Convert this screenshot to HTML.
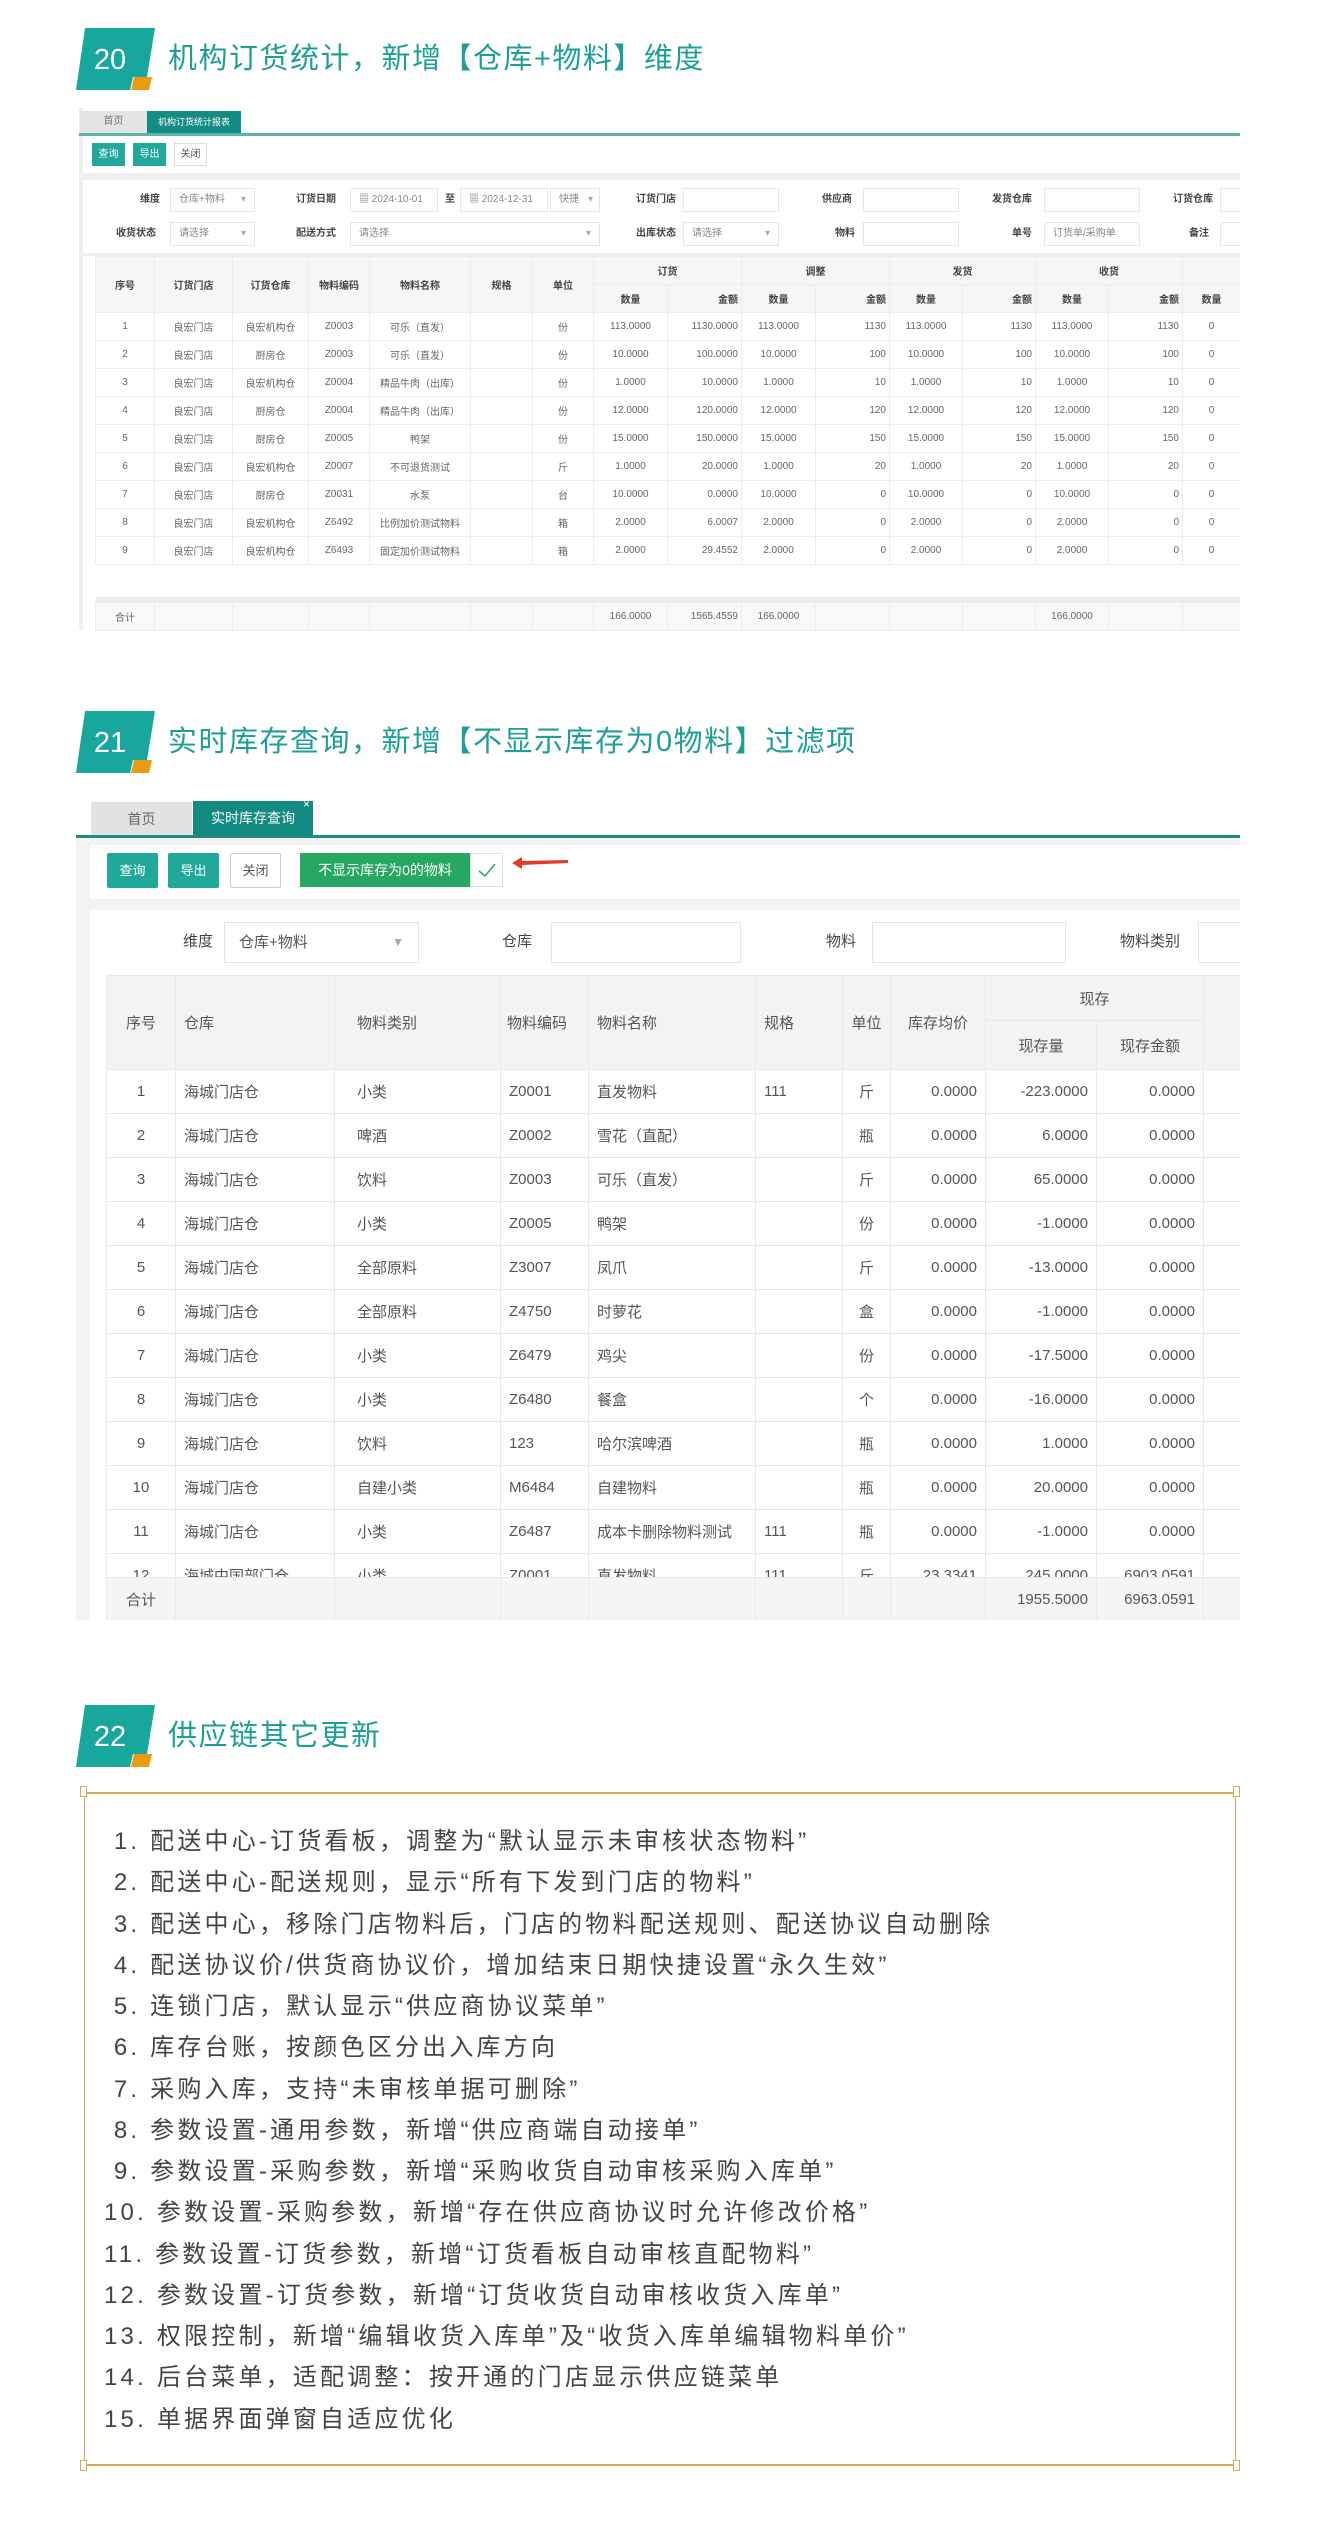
<!DOCTYPE html>
<html><head><meta charset="utf-8">
<style>
*{margin:0;padding:0;box-sizing:border-box}
body{width:1319px;height:2533px;background:#fff;position:relative;overflow:hidden;font-family:"Liberation Sans","Noto Sans CJK SC",sans-serif}
.a{position:absolute}
.title{position:absolute;left:168px;font-size:29px;letter-spacing:1.5px;color:#1e9f96;line-height:36px;white-space:nowrap}
.badge{position:absolute;left:76px;width:82px;height:62px}
.t1{border-collapse:collapse;table-layout:fixed;font-size:10px;color:#666}
.t1 td{border:1px solid #ececec;text-align:center;white-space:nowrap;overflow:hidden;height:28px;padding:0 3px}
.t1 .h td{background:#f6f6f6;color:#444;font-weight:bold}
.t1 .r{text-align:right}
.inp{position:absolute;border:1px solid #e6e6e6;background:#fff;font-size:10px;color:#888;line-height:22px;height:24px;padding-left:8px;white-space:nowrap;overflow:hidden}
.lb{position:absolute;font-size:10px;color:#444;font-weight:bold;line-height:24px;white-space:nowrap}
.t2{border-collapse:collapse;table-layout:fixed;font-size:15px;color:#555}
.t2 td{border:1px solid #e8e8e8;white-space:nowrap;overflow:hidden;height:44px;padding:0 8px}
.t2 .h td{background:#f3f3f3;color:#555}
.t2 .c{text-align:center}
.t2 .r{text-align:right}
.btn{position:absolute;color:#fff;font-size:13px;text-align:center}
.list{position:absolute;left:104px;font-size:24px;color:#444;letter-spacing:3.2px;white-space:nowrap;line-height:30px}
</style></head><body>

<!-- ===== Section 20 ===== -->
<svg class="badge" style="top:28px" viewBox="0 0 82 62"><polygon points="9,0 79,0 71,49 57,49 54,62 0,62" fill="#17a79c"/><polygon points="58,49 76,49 73,62 55,62" fill="#e99b12"/><text x="34" y="41" font-family="Liberation Sans" font-size="29" fill="#fff" text-anchor="middle">20</text></svg>
<div class="title" style="top:41px">机构订货统计，新增【仓库+物料】维度</div>

<div class="a" style="left:79px;top:108px;width:1161px;height:522px;background:#fff;border-left:4px solid #eee"></div>
<div class="a" style="left:80px;top:111px;width:67px;height:22px;background:#e4e4e4;font-size:10px;color:#777;text-align:center;line-height:22px">首页</div>
<div class="a" style="left:147px;top:111px;width:94px;height:22px;background:#148b83;font-size:9px;color:#fff;text-align:center;line-height:22px">机构订货统计报表</div>
<div class="a" style="left:235px;top:108px;font-size:9px;color:#148b83">×</div>
<div class="a" style="left:79px;top:133px;width:1161px;height:3px;background:#5ab3ac"></div>
<div class="btn" style="left:92px;top:143px;width:33px;height:23px;background:#20a89b;font-size:10px;line-height:23px">查询</div>
<div class="btn" style="left:133px;top:143px;width:33px;height:23px;background:#20a89b;font-size:10px;line-height:23px">导出</div>
<div class="btn" style="left:174px;top:143px;width:33px;height:23px;background:#fff;border:1px solid #ddd;color:#555;font-size:10px;line-height:21px">关闭</div>
<div class="a" style="left:79px;top:173px;width:1161px;height:7px;background:#f0f0f0"></div>

<div class="lb" style="left:140px;top:188px">维度</div><div class="inp" style="left:170px;top:188px;width:85px">仓库+物料<span style="position:absolute;right:8px;color:#aaa">▾</span></div>
<div class="lb" style="left:296px;top:188px">订货日期</div><div class="inp" style="left:350px;top:188px;width:88px">▦ 2024-10-01</div>
<div class="lb" style="left:445px;top:188px">至</div><div class="inp" style="left:460px;top:188px;width:88px">▦ 2024-12-31</div>
<div class="inp" style="left:550px;top:188px;width:50px">快捷<span style="position:absolute;right:6px;color:#aaa">▾</span></div>
<div class="lb" style="left:636px;top:188px">订货门店</div><div class="inp" style="left:683px;top:188px;width:96px"></div>
<div class="lb" style="left:822px;top:188px">供应商</div><div class="inp" style="left:863px;top:188px;width:96px"></div>
<div class="lb" style="left:992px;top:188px">发货仓库</div><div class="inp" style="left:1044px;top:188px;width:96px"></div>
<div class="lb" style="left:1173px;top:188px">订货仓库</div><div class="inp" style="left:1220px;top:188px;width:20px;border-right:none"></div>

<div class="lb" style="left:116px;top:222px">收货状态</div><div class="inp" style="left:170px;top:222px;width:85px">请选择<span style="position:absolute;right:8px;color:#aaa">▾</span></div>
<div class="lb" style="left:296px;top:222px">配送方式</div><div class="inp" style="left:350px;top:222px;width:250px">请选择<span style="position:absolute;right:8px;color:#aaa">▾</span></div>
<div class="lb" style="left:636px;top:222px">出库状态</div><div class="inp" style="left:683px;top:222px;width:96px">请选择<span style="position:absolute;right:8px;color:#aaa">▾</span></div>
<div class="lb" style="left:835px;top:222px">物料</div><div class="inp" style="left:863px;top:222px;width:96px"></div>
<div class="lb" style="left:1012px;top:222px">单号</div><div class="inp" style="left:1044px;top:222px;width:96px">订货单/采购单</div>
<div class="lb" style="left:1189px;top:222px">备注</div><div class="inp" style="left:1220px;top:222px;width:20px;border-right:none"></div>
<div class="a" style="left:79px;top:253px;width:1161px;height:3px;background:#f0f0f0"></div>

<div class="a" style="left:95px;top:256px;width:1145px;height:376px;overflow:hidden">
<table class="t1" style="width:1145px">
<colgroup><col style="width:59px"><col style="width:78px"><col style="width:76px"><col style="width:61px"><col style="width:101px"><col style="width:62px"><col style="width:61px"><col style="width:74px"><col style="width:74px"><col style="width:74px"><col style="width:74px"><col style="width:73px"><col style="width:73px"><col style="width:73px"><col style="width:74px"><col style="width:58px"></colgroup>
<tr class="h"><td rowspan="2">序号</td><td rowspan="2">订货门店</td><td rowspan="2">订货仓库</td><td rowspan="2">物料编码</td><td rowspan="2">物料名称</td><td rowspan="2">规格</td><td rowspan="2">单位</td><td colspan="2">订货</td><td colspan="2">调整</td><td colspan="2">发货</td><td colspan="2">收货</td><td></td></tr>
<tr class="h"><td>数量</td><td class="r">金额</td><td>数量</td><td class="r">金额</td><td>数量</td><td class="r">金额</td><td>数量</td><td class="r">金额</td><td>数量</td></tr>
<tr><td>1</td><td>良宏门店</td><td>良宏机构仓</td><td>Z0003</td><td>可乐（直发）</td><td></td><td>份</td><td>113.0000</td><td class="r">1130.0000</td><td>113.0000</td><td class="r">1130</td><td>113.0000</td><td class="r">1130</td><td>113.0000</td><td class="r">1130</td><td>0</td></tr>
<tr><td>2</td><td>良宏门店</td><td>厨房仓</td><td>Z0003</td><td>可乐（直发）</td><td></td><td>份</td><td>10.0000</td><td class="r">100.0000</td><td>10.0000</td><td class="r">100</td><td>10.0000</td><td class="r">100</td><td>10.0000</td><td class="r">100</td><td>0</td></tr>
<tr><td>3</td><td>良宏门店</td><td>良宏机构仓</td><td>Z0004</td><td>精品牛肉（出库）</td><td></td><td>份</td><td>1.0000</td><td class="r">10.0000</td><td>1.0000</td><td class="r">10</td><td>1.0000</td><td class="r">10</td><td>1.0000</td><td class="r">10</td><td>0</td></tr>
<tr><td>4</td><td>良宏门店</td><td>厨房仓</td><td>Z0004</td><td>精品牛肉（出库）</td><td></td><td>份</td><td>12.0000</td><td class="r">120.0000</td><td>12.0000</td><td class="r">120</td><td>12.0000</td><td class="r">120</td><td>12.0000</td><td class="r">120</td><td>0</td></tr>
<tr><td>5</td><td>良宏门店</td><td>厨房仓</td><td>Z0005</td><td>鸭架</td><td></td><td>份</td><td>15.0000</td><td class="r">150.0000</td><td>15.0000</td><td class="r">150</td><td>15.0000</td><td class="r">150</td><td>15.0000</td><td class="r">150</td><td>0</td></tr>
<tr><td>6</td><td>良宏门店</td><td>良宏机构仓</td><td>Z0007</td><td>不可退货测试</td><td></td><td>斤</td><td>1.0000</td><td class="r">20.0000</td><td>1.0000</td><td class="r">20</td><td>1.0000</td><td class="r">20</td><td>1.0000</td><td class="r">20</td><td>0</td></tr>
<tr><td>7</td><td>良宏门店</td><td>厨房仓</td><td>Z0031</td><td>水泵</td><td></td><td>台</td><td>10.0000</td><td class="r">0.0000</td><td>10.0000</td><td class="r">0</td><td>10.0000</td><td class="r">0</td><td>10.0000</td><td class="r">0</td><td>0</td></tr>
<tr><td>8</td><td>良宏门店</td><td>良宏机构仓</td><td>Z6492</td><td>比例加价测试物料</td><td></td><td>箱</td><td>2.0000</td><td class="r">6.0007</td><td>2.0000</td><td class="r">0</td><td>2.0000</td><td class="r">0</td><td>2.0000</td><td class="r">0</td><td>0</td></tr>
<tr><td>9</td><td>良宏门店</td><td>良宏机构仓</td><td>Z6493</td><td>固定加价测试物料</td><td></td><td>箱</td><td>2.0000</td><td class="r">29.4552</td><td>2.0000</td><td class="r">0</td><td>2.0000</td><td class="r">0</td><td>2.0000</td><td class="r">0</td><td>0</td></tr>
<tr><td colspan="16" style="height:32px;border:none"></td></tr>
<tr><td colspan="16" style="height:6px;background:#ededed;border:none;padding:0"></td></tr>
<tr style="background:#f8f8f8"><td>合计</td><td></td><td></td><td></td><td></td><td></td><td></td><td>166.0000</td><td class="r">1565.4559</td><td>166.0000</td><td></td><td></td><td></td><td>166.0000</td><td></td><td></td></tr>
</table></div>

<!-- ===== Section 21 ===== -->
<svg class="badge" style="top:711px" viewBox="0 0 82 62"><polygon points="9,0 79,0 71,49 57,49 54,62 0,62" fill="#17a79c"/><polygon points="58,49 76,49 73,62 55,62" fill="#e99b12"/><text x="34" y="41" font-family="Liberation Sans" font-size="29" fill="#fff" text-anchor="middle">21</text></svg>
<div class="title" style="top:724px">实时库存查询，新增【不显示库存为0物料】过滤项</div>

<div class="a" style="left:91px;top:802px;width:101px;height:34px;background:#e2e2e2;font-size:14px;color:#666;text-align:center;line-height:34px">首页</div>
<div class="a" style="left:193px;top:801px;width:120px;height:35px;background:#128a82;font-size:14px;color:#fff;text-align:center;line-height:35px">实时库存查询</div>
<div class="a" style="left:303px;top:797px;font-size:12px;color:#fff">×</div>
<div class="a" style="left:76px;top:835px;width:1164px;height:3px;background:#1e8a84"></div>
<div class="a" style="left:76px;top:838px;width:1164px;height:782px;background:#f3f3f3"></div>
<div class="a" style="left:90px;top:845px;width:1150px;height:54px;background:#fff"></div>
<div class="btn" style="left:107px;top:853px;width:51px;height:35px;background:#20a89b;line-height:35px;border-radius:2px">查询</div>
<div class="btn" style="left:168px;top:853px;width:51px;height:35px;background:#20a89b;line-height:35px;border-radius:2px">导出</div>
<div class="btn" style="left:230px;top:853px;width:51px;height:35px;background:#fff;border:1px solid #ccc;color:#555;line-height:33px;border-radius:2px">关闭</div>
<div class="btn" style="left:300px;top:853px;width:170px;height:34px;background:#27a862;line-height:34px;font-size:14px">不显示库存为0的物料</div>
<div class="a" style="left:470px;top:853px;width:33px;height:34px;background:#fff;border:1px solid #ddd"></div>
<svg class="a" style="left:476px;top:860px" width="22" height="20"><path d="M3 11 L9 16 L19 4" stroke="#2aa860" stroke-width="1.5" fill="none"/></svg>
<svg class="a" style="left:512px;top:855px" width="58" height="16"><polygon points="0,8 10,2 10,6 56,5 56,8 10,10 10,14" fill="#e53a2a"/></svg>

<div class="a" style="left:90px;top:910px;width:1150px;height:710px;background:#fff"></div>
<div class="a" style="left:183px;top:930px;font-size:15px;color:#444;line-height:24px">维度</div>
<div class="a" style="left:224px;top:922px;width:195px;height:41px;border:1px solid #e5e5e5;font-size:15px;color:#555;line-height:39px;padding-left:14px">仓库+物料<span style="position:absolute;right:14px;color:#aaa;font-size:12px">▼</span></div>
<div class="a" style="left:502px;top:930px;font-size:15px;color:#444;line-height:24px">仓库</div>
<div class="a" style="left:551px;top:922px;width:190px;height:41px;border:1px solid #e5e5e5"></div>
<div class="a" style="left:826px;top:930px;font-size:15px;color:#444;line-height:24px">物料</div>
<div class="a" style="left:872px;top:922px;width:194px;height:41px;border:1px solid #e5e5e5"></div>
<div class="a" style="left:1120px;top:930px;font-size:15px;color:#444;line-height:24px">物料类别</div>
<div class="a" style="left:1198px;top:922px;width:42px;height:41px;border:1px solid #e5e5e5;border-right:none"></div>

<div class="a" style="left:106px;top:975px;width:1134px;height:602px;overflow:hidden">
<table class="t2" style="width:1134px">
<colgroup><col style="width:69px"><col style="width:159px"><col style="width:166px"><col style="width:88px"><col style="width:167px"><col style="width:87px"><col style="width:48px"><col style="width:95px"><col style="width:111px"><col style="width:107px"><col style="width:37px"></colgroup>
<tr class="h"><td rowspan="2" class="c" style="padding:0">序号</td><td rowspan="2">仓库</td><td rowspan="2" style="padding-left:22px">物料类别</td><td rowspan="2" style="padding-left:6px">物料编码</td><td rowspan="2">物料名称</td><td rowspan="2">规格</td><td rowspan="2" class="c" style="padding:0">单位</td><td rowspan="2" class="c" style="padding:0">库存均价</td><td colspan="2" class="c" style="height:45px">现存</td><td rowspan="2"></td></tr>
<tr class="h"><td class="c" style="height:49px">现存量</td><td class="c">现存金额</td></tr>
<tr><td class="c">1</td><td>海城门店仓</td><td style="padding-left:22px">小类</td><td>Z0001</td><td>直发物料</td><td>111</td><td class="c">斤</td><td class="r">0.0000</td><td class="r">-223.0000</td><td class="r">0.0000</td><td></td></tr>
<tr><td class="c">2</td><td>海城门店仓</td><td style="padding-left:22px">啤酒</td><td>Z0002</td><td>雪花（直配）</td><td></td><td class="c">瓶</td><td class="r">0.0000</td><td class="r">6.0000</td><td class="r">0.0000</td><td></td></tr>
<tr><td class="c">3</td><td>海城门店仓</td><td style="padding-left:22px">饮料</td><td>Z0003</td><td>可乐（直发）</td><td></td><td class="c">斤</td><td class="r">0.0000</td><td class="r">65.0000</td><td class="r">0.0000</td><td></td></tr>
<tr><td class="c">4</td><td>海城门店仓</td><td style="padding-left:22px">小类</td><td>Z0005</td><td>鸭架</td><td></td><td class="c">份</td><td class="r">0.0000</td><td class="r">-1.0000</td><td class="r">0.0000</td><td></td></tr>
<tr><td class="c">5</td><td>海城门店仓</td><td style="padding-left:22px">全部原料</td><td>Z3007</td><td>凤爪</td><td></td><td class="c">斤</td><td class="r">0.0000</td><td class="r">-13.0000</td><td class="r">0.0000</td><td></td></tr>
<tr><td class="c">6</td><td>海城门店仓</td><td style="padding-left:22px">全部原料</td><td>Z4750</td><td>时萝花</td><td></td><td class="c">盒</td><td class="r">0.0000</td><td class="r">-1.0000</td><td class="r">0.0000</td><td></td></tr>
<tr><td class="c">7</td><td>海城门店仓</td><td style="padding-left:22px">小类</td><td>Z6479</td><td>鸡尖</td><td></td><td class="c">份</td><td class="r">0.0000</td><td class="r">-17.5000</td><td class="r">0.0000</td><td></td></tr>
<tr><td class="c">8</td><td>海城门店仓</td><td style="padding-left:22px">小类</td><td>Z6480</td><td>餐盒</td><td></td><td class="c">个</td><td class="r">0.0000</td><td class="r">-16.0000</td><td class="r">0.0000</td><td></td></tr>
<tr><td class="c">9</td><td>海城门店仓</td><td style="padding-left:22px">饮料</td><td>123</td><td>哈尔滨啤酒</td><td></td><td class="c">瓶</td><td class="r">0.0000</td><td class="r">1.0000</td><td class="r">0.0000</td><td></td></tr>
<tr><td class="c">10</td><td>海城门店仓</td><td style="padding-left:22px">自建小类</td><td>M6484</td><td>自建物料</td><td></td><td class="c">瓶</td><td class="r">0.0000</td><td class="r">20.0000</td><td class="r">0.0000</td><td></td></tr>
<tr><td class="c">11</td><td>海城门店仓</td><td style="padding-left:22px">小类</td><td>Z6487</td><td>成本卡删除物料测试</td><td>111</td><td class="c">瓶</td><td class="r">0.0000</td><td class="r">-1.0000</td><td class="r">0.0000</td><td></td></tr>
<tr><td class="c">12</td><td>海城中国部门仓</td><td style="padding-left:22px">小类</td><td>Z0001</td><td>直发物料</td><td>111</td><td class="c">斤</td><td class="r">23.3341</td><td class="r">245.0000</td><td class="r">6903.0591</td><td></td></tr>
</table></div>
<div class="a" style="left:106px;top:1577px;width:1134px;height:43px;overflow:hidden">
<table class="t2" style="width:1134px">
<colgroup><col style="width:69px"><col style="width:159px"><col style="width:166px"><col style="width:88px"><col style="width:167px"><col style="width:87px"><col style="width:48px"><col style="width:95px"><col style="width:111px"><col style="width:107px"><col style="width:37px"></colgroup>
<tr style="background:#f5f5f5"><td class="c" style="height:43px">合计</td><td></td><td></td><td></td><td></td><td></td><td></td><td></td><td class="r">1955.5000</td><td class="r">6963.0591</td><td></td></tr>
</table></div>

<!-- ===== Section 22 ===== -->
<svg class="badge" style="top:1705px" viewBox="0 0 82 62"><polygon points="9,0 79,0 71,49 57,49 54,62 0,62" fill="#17a79c"/><polygon points="58,49 76,49 73,62 55,62" fill="#e99b12"/><text x="34" y="41" font-family="Liberation Sans" font-size="29" fill="#fff" text-anchor="middle">22</text></svg>
<div class="title" style="top:1718px">供应链其它更新</div>

<div class="a" style="left:84px;top:1792px;width:1152px;height:674px;border:1px solid #d1ad55;border-top:2px solid #d1ad55;border-bottom:2px solid #d1ad55"></div>
<div class="a" style="left:80px;top:1786px;width:7px;height:11px;border:1px solid #d1ad55;background:#fff"></div>
<div class="a" style="left:1233px;top:1786px;width:7px;height:11px;border:1px solid #d1ad55;background:#fff"></div>
<div class="a" style="left:80px;top:2460px;width:7px;height:11px;border:1px solid #d1ad55;background:#fff"></div>
<div class="a" style="left:1233px;top:2460px;width:7px;height:11px;border:1px solid #d1ad55;background:#fff"></div>

<div class="list" style="top:1827px">&nbsp;1. 配送中心-订货看板，调整为“默认显示未审核状态物料”</div>
<div class="list" style="top:1868px">&nbsp;2. 配送中心-配送规则，显示“所有下发到门店的物料”</div>
<div class="list" style="top:1910px">&nbsp;3. 配送中心，移除门店物料后，门店的物料配送规则、配送协议自动删除</div>
<div class="list" style="top:1951px">&nbsp;4. 配送协议价/供货商协议价，增加结束日期快捷设置“永久生效”</div>
<div class="list" style="top:1992px">&nbsp;5. 连锁门店，默认显示“供应商协议菜单”</div>
<div class="list" style="top:2033px">&nbsp;6. 库存台账，按颜色区分出入库方向</div>
<div class="list" style="top:2075px">&nbsp;7. 采购入库，支持“未审核单据可删除”</div>
<div class="list" style="top:2116px">&nbsp;8. 参数设置-通用参数，新增“供应商端自动接单”</div>
<div class="list" style="top:2157px">&nbsp;9. 参数设置-采购参数，新增“采购收货自动审核采购入库单”</div>
<div class="list" style="top:2198px">10. 参数设置-采购参数，新增“存在供应商协议时允许修改价格”</div>
<div class="list" style="top:2240px">11. 参数设置-订货参数，新增“订货看板自动审核直配物料”</div>
<div class="list" style="top:2281px">12. 参数设置-订货参数，新增“订货收货自动审核收货入库单”</div>
<div class="list" style="top:2322px">13. 权限控制，新增“编辑收货入库单”及“收货入库单编辑物料单价”</div>
<div class="list" style="top:2363px">14. 后台菜单，适配调整：按开通的门店显示供应链菜单</div>
<div class="list" style="top:2405px">15. 单据界面弹窗自适应优化</div>
</body></html>
